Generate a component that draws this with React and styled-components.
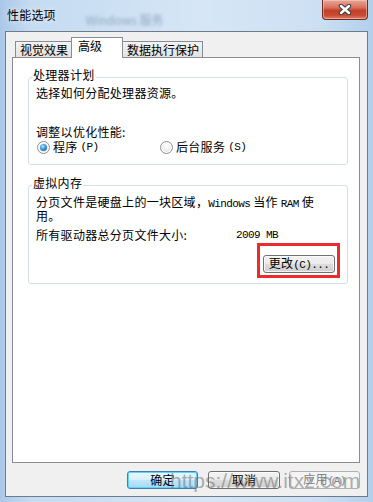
import React from "react";
import styled, { createGlobalStyle, css } from "styled-components";

const GlobalStyle = createGlobalStyle`
  * { box-sizing: border-box; }
  body {
    margin: 0;
    background: #b9d4ee;
    font-family: "Noto Sans CJK SC", "Liberation Sans", sans-serif;
  }
`;

const Frame = styled.div`
  position: relative;
  width: 373px;
  height: 502px;
  display: flex;
  flex-direction: column;
  overflow: hidden;
  background: linear-gradient(90deg, #a9c8e9 0%, #c4dbf1 8%, #d6e6f6 55%, #cde0f3 85%, #b2cfec 100%);
`;

const TitleBar = styled.div`
  height: 31px;
  display: flex;
  align-items: flex-start;
  padding-left: 7px;
`;

const Title = styled.span`
  margin-top: 7px;
  font-size: 12px;
  line-height: 16px;
  color: #000;
  letter-spacing: 0.2px;
  text-shadow: 0 0 6px rgba(255, 255, 255, 0.9);
`;

const Ghost = styled.span`
  margin: 13px 0 0 30px;
  font-size: 12px;
  line-height: 14px;
  color: rgba(40, 60, 90, 0.35);
  filter: blur(1.4px);
`;

const CloseButton = styled.div`
  margin-left: auto;
  margin-right: 5px;
  width: 46px;
  height: 20px;
  display: flex;
  align-items: center;
  justify-content: center;
  border: 1px solid #6e2c22;
  border-top: none;
  border-radius: 0 0 4px 4px;
  background: linear-gradient(#e9a898 0%, #d9705c 40%, #c4402a 55%, #c94a32 80%, #dc8266 100%);
  box-shadow: inset 0 0 0 1px rgba(255, 220, 210, 0.45);
`;

const Client = styled.div`
  flex: 1;
  margin: 0 5px 5px 5px;
  border: 1px solid #6f7b8a;
  background: #f0f0f0;
  display: flex;
  flex-direction: column;
  padding: 5px 7px 0 6px;
`;

const TabStrip = styled.div`
  display: flex;
  align-items: flex-end;
  height: 20px;
  padding-left: 3px;
`;

const Tab = styled.div`
  height: 16px;
  padding: 0 3px 0 4px;
  border: 1px solid #898c95;
  border-bottom: none;
  margin-left: -1px;
  font-size: 12px;
  line-height: 15px;
  color: #000;
  background: linear-gradient(#f3f3f3, #e2e2e2);
  ${(p) =>
    p.$active &&
    css`
      position: relative;
      z-index: 1;
      height: 21px;
      margin-bottom: -1px;
      padding: 0 20px 0 6px;
      line-height: 16px;
      background: #fff;
    `}
  &:first-child { margin-left: 0; }
`;

const Panel = styled.div`
  height: 406px;
  border: 1px solid #898c95;
  background: #fff;
  padding: 10px 11px 0 15px;
`;

const Group = styled.fieldset`
  margin: ${(p) => p.$top || 0}px 0 0;
  padding: 0 7px ${(p) => p.$bottom}px 7px;
  border: 1px solid #d5dfe5;
  border-radius: 3px;
  min-width: 0;
`;

const Legend = styled.legend`
  margin-left: -4px;
  padding: 0 1px 4px;
  font-size: 12px;
  line-height: 14px;
  letter-spacing: 0.3px;
  color: #000;
`;

const Text = styled.div`
  font-size: 12px;
  line-height: ${(p) => p.$lh || 14}px;
  margin-top: ${(p) => p.$mt || 0}px;
  letter-spacing: 0.3px;
  color: #000;
`;

const Mono = styled.span`
  font-family: "Liberation Mono", monospace;
  font-size: 11px;
  letter-spacing: -0.6px;
`;

const RadioRow = styled.div`
  display: grid;
  grid-template-columns: 123px auto;
  margin-top: 1px;
  padding-left: 1px;
  font-size: 12px;
  line-height: 14px;
  letter-spacing: 0.3px;
`;

const RadioOption = styled.label`
  display: flex;
  align-items: center;
  gap: 3px;
`;

const RadioDot = styled.span`
  position: relative;
  width: 13px;
  height: 13px;
  border-radius: 50%;
  border: 1px solid #8f8f8f;
  background: radial-gradient(circle at 50% 35%, #ffffff 0%, #ececec 55%, #d6d6d6 100%);
  box-shadow: inset 0 0 0 1px #fff;
  ${(p) =>
    p.$checked &&
    css`
      &::after {
        content: "";
        position: absolute;
        left: 2px;
        top: 2px;
        width: 7px;
        height: 7px;
        border-radius: 50%;
        background: radial-gradient(circle at 40% 35%, #b9ecff 0%, #3f9ee0 40%, #0f4f93 100%);
      }
    `}
`;

const SizeRow = styled.div`
  display: grid;
  grid-template-columns: 200px auto;
  margin-top: 7px;
  font-size: 12px;
  line-height: 14px;
  letter-spacing: 0.3px;
`;

const ActionRow = styled.div`
  display: flex;
  justify-content: flex-end;
  margin-top: 1px;
`;

const Highlight = styled.div`
  border: 3px solid #ee2b2b;
  padding: 3px 2px 2px 3px;
`;

const Button = styled.button`
  width: ${(p) => p.$w || 71}px;
  height: 18px;
  padding: 0;
  border: 1px solid #707070;
  border-radius: 3px;
  font-family: "Noto Sans CJK SC", "Liberation Sans", sans-serif;
  font-size: 12px;
  line-height: 14px;
  letter-spacing: 0.3px;
  color: #000;
  background: linear-gradient(#f3f3f3 0%, #ebebeb 48%, #dddddd 52%, #cfcfcf 100%);
  box-shadow: inset 0 0 0 1px rgba(255, 255, 255, 0.7);
  ${(p) =>
    p.$default &&
    css`
      border-color: #3c7fb1;
      box-shadow: inset 0 0 0 1px #5fd3fb;
      background: linear-gradient(#eaf6fd 0%, #d9f0fc 48%, #bee6fd 52%, #a7d9f5 100%);
    `}
  ${(p) =>
    p.disabled &&
    css`
      border-color: #adb2b5;
      background: #f4f4f4;
      box-shadow: none;
      color: #838383;
    `}
`;

const Footer = styled.div`
  display: flex;
  justify-content: flex-end;
  gap: 9px;
  margin-top: 8px;
`;

const Watermark = styled.div`
  position: absolute;
  left: 170px;
  top: 469px;
  font-family: "Liberation Sans", sans-serif;
  font-size: 21px;
  line-height: 24px;
  color: rgba(110, 110, 110, 0.55);
  pointer-events: none;
`;

export default function App() {
  return (
    <>
      <GlobalStyle />
      <Frame>
        <TitleBar>
          <Title>性能选项</Title>
          <Ghost>Windows 服务</Ghost>
          <CloseButton>
            <svg width="14" height="11" viewBox="0 0 14 11">
              <path d="M3 2 L11 9 M11 2 L3 9" stroke="#3a3f48" strokeWidth="4.4" strokeLinecap="round" />
              <path d="M3 2 L11 9 M11 2 L3 9" stroke="#fff" strokeWidth="2.4" strokeLinecap="round" />
            </svg>
          </CloseButton>
        </TitleBar>
        <Client>
          <TabStrip>
            <Tab>视觉效果</Tab>
            <Tab $active>高级</Tab>
            <Tab>数据执行保护</Tab>
          </TabStrip>
          <Panel>
            <Group $bottom={10}>
              <Legend>处理器计划</Legend>
              <Text>选择如何分配处理器资源。</Text>
              <Text $mt={25}>调整以优化性能:</Text>
              <RadioRow>
                <RadioOption>
                  <RadioDot $checked />
                  程序<Mono>(P)</Mono>
                </RadioOption>
                <RadioOption>
                  <RadioDot />
                  后台服务<Mono>(S)</Mono>
                </RadioOption>
              </RadioRow>
            </Group>
            <Group $top={11} $bottom={5}>
              <Legend>虚拟内存</Legend>
              <Text $lh={11} $mt={2}>
                分页文件是硬盘上的一块区域，<Mono>Windows</Mono> 当作 <Mono>RAM</Mono> 使
                <br />
                用。
              </Text>
              <SizeRow>
                <span>所有驱动器总分页文件大小:</span>
                <Mono>2009 MB</Mono>
              </SizeRow>
              <ActionRow>
                <Highlight>
                  <Button $w={72}>
                    更改<Mono>(C)...</Mono>
                  </Button>
                </Highlight>
              </ActionRow>
            </Group>
          </Panel>
          <Footer>
            <Button $default $w={71}>确定</Button>
            <Button $w={72} style={{ marginLeft: 1 }}>取消</Button>
            <Button disabled $w={71}>
              应用<Mono>(A)</Mono>
            </Button>
          </Footer>
        </Client>
        <Watermark>https://www.itxz.com</Watermark>
      </Frame>
    </>
  );
}
